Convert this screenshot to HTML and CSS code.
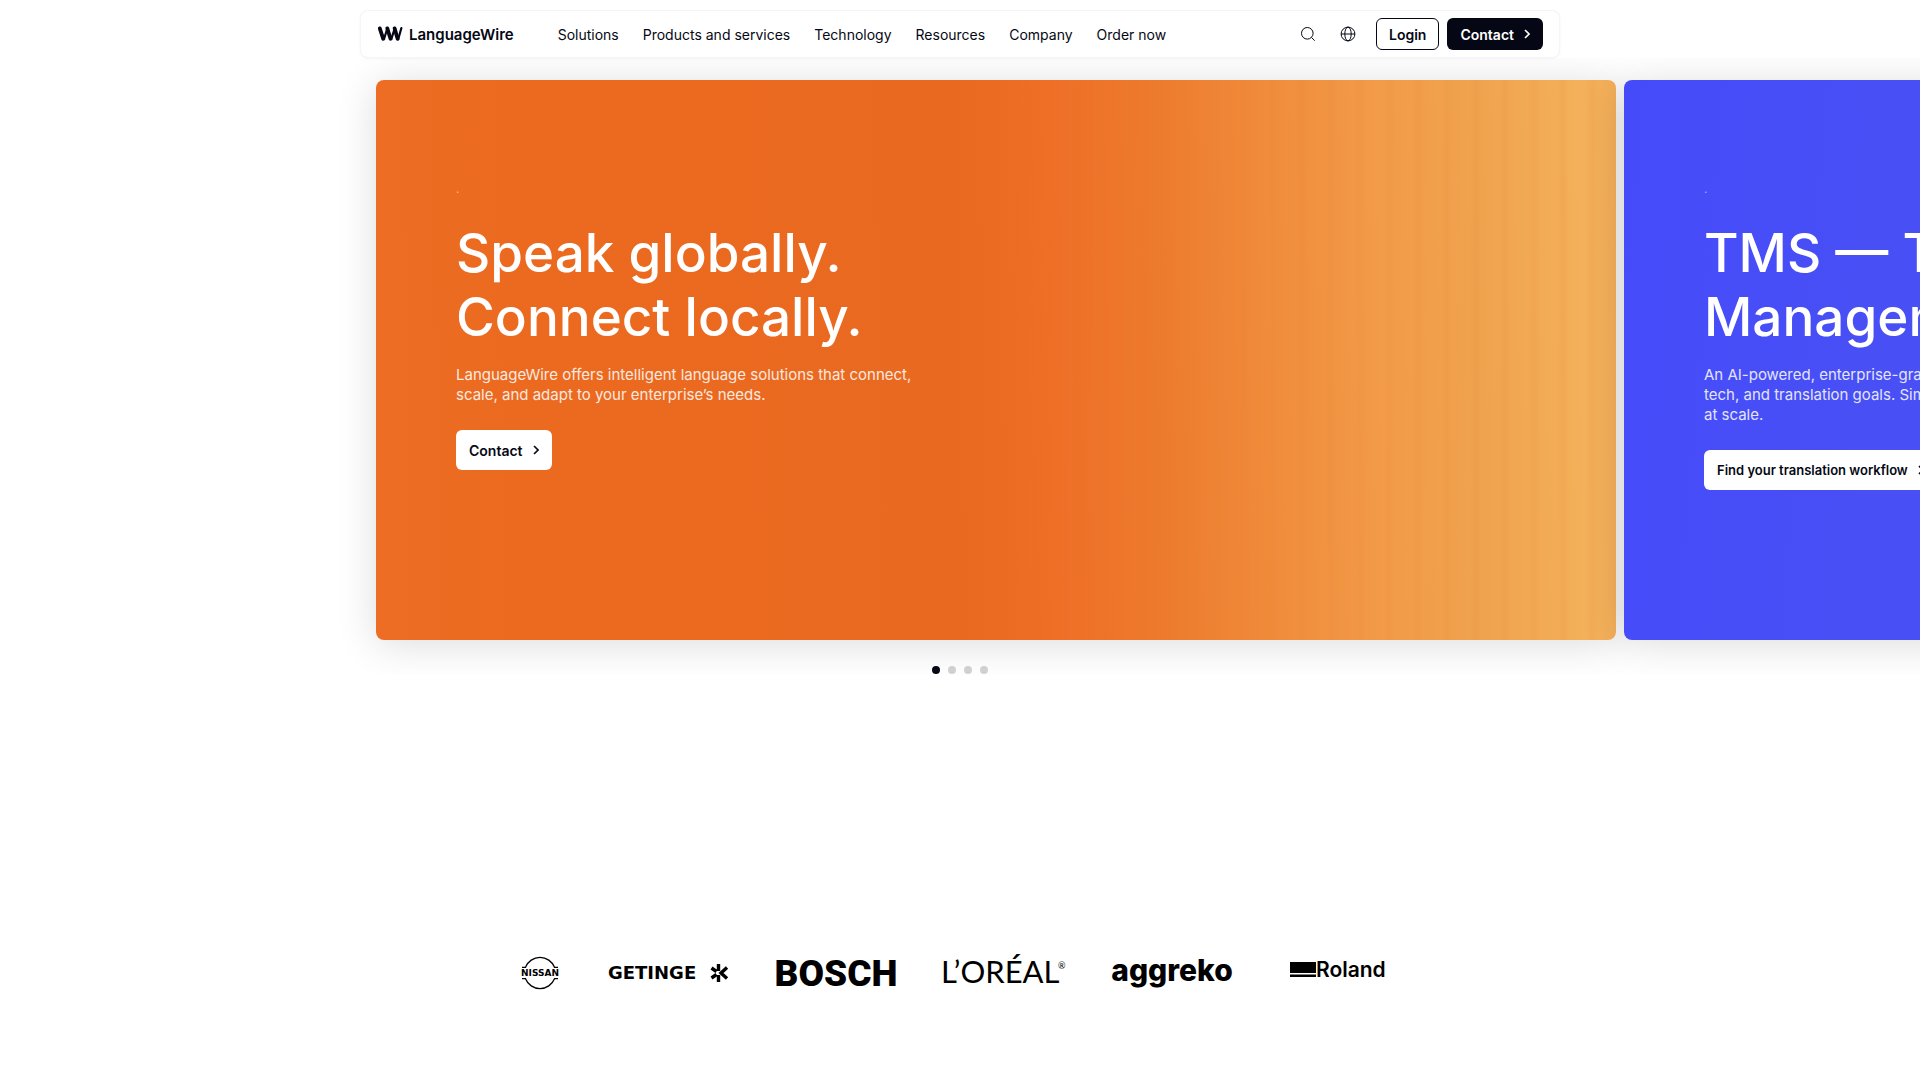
FILE: index.html
```html
<!DOCTYPE html>
<html lang="en">
<head>
  <meta charset="UTF-8">
  <meta name="viewport" content="width=device-width, initial-scale=1.0">
  <title>LanguageWire</title>
  <link rel="stylesheet" href="styles.css">
</head>
<body>
  <header class="header">
    <a class="brand" href="#">
      <svg width="26" height="16" viewBox="0 0 26 16" fill="none" stroke="#050814" stroke-linecap="round" aria-hidden="true">
        <path d="M2.8 2.4 6.2 12.8M10.3 2.4 13.5 12.8M17.6 2.4 20.6 12.8" stroke-width="3.8"/>
        <path d="M7 13.2 9.8 4M14.3 13.2 17.2 4M21.2 13.2 24.4 2" stroke-width="2.2"/>
      </svg>
      <span>LanguageWire</span>
    </a>
    <nav class="nav">
      <a href="#">Solutions</a>
      <a href="#">Products and services</a>
      <a href="#">Technology</a>
      <a href="#">Resources</a>
      <a href="#">Company</a>
      <a href="#">Order now</a>
    </nav>
    <div class="actions">
      <button class="icon-btn" type="button" aria-label="Search">
        <svg width="16" height="16" viewBox="0 0 16 16" fill="none" stroke="#050814"><circle cx="7.3" cy="7.3" r="5.8"/><path d="m11.5 11.5 3.2 3.2"/></svg>
      </button>
      <button class="icon-btn" type="button" aria-label="Language">
        <svg width="16" height="16" viewBox="0 0 16 16" fill="none" stroke="#050814"><circle cx="8" cy="8" r="6.9"/><ellipse cx="8" cy="8" rx="3.2" ry="6.9"/><path d="M1 8h14"/></svg>
      </button>
      <a class="btn btn-outline" href="#">Login</a>
      <a class="btn btn-dark" href="#">Contact
        <svg width="6" height="10" viewBox="0 0 6 10" fill="none" stroke="currentColor" stroke-width="1.6"><path d="m1 1 4 4-4 4"/></svg>
      </a>
    </div>
  </header>

  <main>
    <section class="carousel">
      <div class="slides">
        <article class="slide slide-orange">
          <p class="eyebrow">.</p>
          <h1>Speak globally.<br>Connect locally.</h1>
          <p class="lead">LanguageWire offers intelligent language solutions that connect,<br>scale, and adapt to your enterprise’s needs.</p>
          <a class="btn btn-white" href="#">Contact
            <svg width="6" height="10" viewBox="0 0 6 10" fill="none" stroke="currentColor" stroke-width="1.6"><path d="m1 1 4 4-4 4"/></svg>
          </a>
        </article>
        <article class="slide slide-blue">
          <p class="eyebrow">.</p>
          <h2>TMS — Translation<br>Management System</h2>
          <p class="lead">An AI-powered, enterprise-grade TMS that connects your content,<br>tech, and translation goals. Simplify and automate your workflows<br>at scale.</p>
          <a class="btn btn-white" href="#">Find your translation workflow
            <svg width="6" height="10" viewBox="0 0 6 10" fill="none" stroke="currentColor" stroke-width="1.6"><path d="m1 1 4 4-4 4"/></svg>
          </a>
        </article>
      </div>
      <div class="dots">
        <button class="dot active" type="button" aria-label="Slide 1"></button>
        <button class="dot" type="button" aria-label="Slide 2"></button>
        <button class="dot" type="button" aria-label="Slide 3"></button>
        <button class="dot" type="button" aria-label="Slide 4"></button>
      </div>
    </section>

    <section class="logos">
      <!-- Nissan -->
      <svg width="40" height="40" viewBox="0 0 40 40">
        <path d="M2 14.3h3.5a15.6 15.6 0 0 1 29 0H38M2 25.7h3.5a15.6 15.6 0 0 0 29 0H38" fill="none" stroke="#000" stroke-width="1.3"/>
        <text class="logo-nissan" x="20" y="23" text-anchor="middle">NISSAN</text>
      </svg>
      <!-- Getinge -->
      <svg width="120" height="40" viewBox="0 0 120 40">
        <text class="logo-getinge" x="0" y="26">GETINGE</text>
        <path d="M110.5 11v7M110.5 22v7M103.5 15l5 3.5M103.5 25l5-3.5M119 14.5l-6 5.5 6 5.5" fill="none" stroke="#000" stroke-width="3.4"/>
      </svg>
      <!-- Bosch -->
      <svg width="120" height="40" viewBox="0 0 120 40">
        <text class="logo-bosch" x="60" y="33" text-anchor="middle">BOSCH</text>
      </svg>
      <!-- L'Oréal -->
      <svg width="120" height="40" viewBox="0 0 120 40">
        <text class="logo-loreal" x="-3" y="30">L’ORÉAL</text>
        <text class="logo-reg" x="114" y="16">®</text>
      </svg>
      <!-- Aggreko -->
      <svg width="120" height="40" viewBox="0 0 120 40">
        <text class="logo-aggreko" x="60" y="28" text-anchor="middle">aggreko</text>
      </svg>
      <!-- Roland -->
      <svg width="120" height="40" viewBox="0 0 120 40">
        <path d="M10 9h26v11H10zM10 21.5h26V24H10z"/>
        <text class="logo-roland" x="36" y="24">Roland</text>
      </svg>
    </section>
  </main>
</body>
</html>
```
FILE: styles.css
```css
* {
  box-sizing: border-box;
}
body {
  margin: 0;
  padding-top: 10px;
  background: #fff;
  color: #050814;
  font-family: Inter, 'Liberation Sans', sans-serif;
  font-size: 14px;
  overflow-x: hidden;
}
a {
  color: inherit;
  text-decoration: none;
}
.header {
  position: relative;
  z-index: 1;
  display: flex;
  align-items: center;
  max-width: 1200px;
  height: 48px;
  margin: 0 auto;
  padding: 0 16px;
  background: #fff;
  border: 1px solid #f5f5f5;
  border-radius: 8px;
  box-shadow: 0 1px 3px rgba(0, 0, 0, 0.04);
}
.brand {
  display: flex;
  align-items: center;
  gap: 6px;
  font-size: 15px;
  font-weight: 600;
}
.nav {
  display: flex;
  gap: 24px;
  margin-left: 44px;
}
.actions {
  display: flex;
  align-items: center;
  gap: 8px;
  margin-left: auto;
}
.icon-btn {
  display: flex;
  align-items: center;
  justify-content: center;
  width: 32px;
  height: 32px;
  padding: 0;
  background: none;
  border: none;
  cursor: pointer;
}
.btn {
  display: inline-flex;
  align-items: center;
  gap: 10px;
  height: 32px;
  padding: 0 12px;
  border: 1px solid transparent;
  border-radius: 6px;
  font-weight: 600;
}
.btn-outline {
  margin-left: 4px;
  border-color: #050814;
}
.btn-dark {
  background: #050814;
  color: #fff;
}
.btn-white {
  height: 40px;
  background: #fff;
  color: #050814;
}

/* Carousel */
.carousel {
  padding-top: 22px;
  overflow: hidden;
}
.slides {
  display: flex;
  gap: 8px;
  padding-left: calc((100% - 1168px) / 2);
}
.slide {
  flex: 0 0 1240px;
  min-height: 560px;
  padding: 101px 80px;
  border-radius: 8px;
  box-shadow: 0 4px 40px rgba(0, 0, 0, 0.14);
  color: #fff;
}
.slide-orange {
  background:
    repeating-linear-gradient(90deg, transparent 0 6px, rgba(225, 130, 50, 0.12) 12px, transparent 18px 29px) right / 45% 100% no-repeat,
    linear-gradient(89deg, #ed6d24 0%, #eb6a20 12%, #ea6920 47%, #ef6f27 55%, #ed7a2d 63%, #f08c3b 72%, #f29b49 81%, #f0a34e 89%, #f4b05a 97%, #f3ae59 100%);
}
.slide-blue {
  background: linear-gradient(95deg, #464bfa 0%, #484ff5 20%, #4a54f4 50%, #6a7cf8 100%);
}
.slide-blue .btn-white {
  font-size: 13px;
}
.eyebrow {
  margin: 0 0 24px;
  font-size: 12px;
  line-height: 16px;
  opacity: 0.5;
}
.slide h1,
.slide h2 {
  margin: 0;
  font-size: 53px;
  font-weight: 500;
  line-height: 64px;
}
.lead {
  margin: 16px 0 25px;
  font-size: 15px;
  line-height: 20px;
  opacity: 0.85;
}
.dots {
  display: flex;
  justify-content: center;
  gap: 8px;
  margin-top: 26px;
}
.dot {
  width: 8px;
  height: 8px;
  padding: 0;
  border: none;
  border-radius: 50%;
  background: #d0d0d0;
  cursor: pointer;
}
.dot.active {
  background: #050814;
}

/* Customer logos */
.logos {
  display: flex;
  justify-content: center;
  gap: 48px;
  margin-top: 279px;
}
.logos svg {
  flex: none;
  overflow: visible;
}
.logo-nissan {
  font: 700 9px 'DejaVu Sans', sans-serif;
}
.logo-getinge {
  font: 700 18px 'DejaVu Sans', sans-serif;
}
.logo-bosch {
  font: 900 37px Roboto, sans-serif;
}
.logo-loreal {
  font: 400 31px Lato, sans-serif;
}
.logo-reg {
  font: 400 9px Lato, sans-serif;
}
.logo-aggreko {
  font: 800 30px Inter, sans-serif;
}
.logo-roland {
  font: 600 21px Inter, sans-serif;
}
```
